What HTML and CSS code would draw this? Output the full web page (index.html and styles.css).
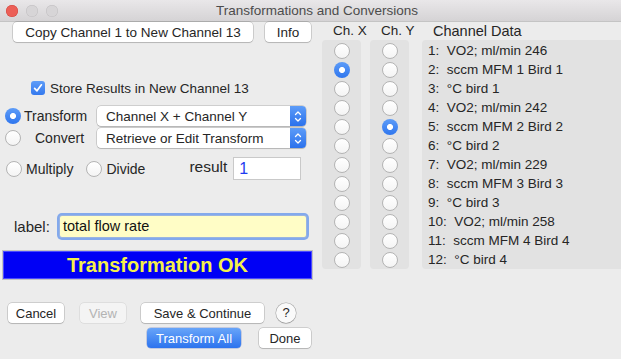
FILE: index.html
```html
<!DOCTYPE html>
<html lang="en">
<head>
    <meta charset="UTF-8">
    <title>Transformations and Conversions</title>
    <link rel="stylesheet" href="styles.css">
</head>
<body>
    <!-- Title bar -->
    <div class="titlebar">
        <div class="lights">
            <span class="light red"></span>
            <span class="light"></span>
            <span class="light"></span>
        </div>
        <div class="title">Transformations and Conversions</div>
    </div>

    <div class="window">
        <!-- Left side: controls -->
        <div class="left">
            <div class="top-buttons">
                <button class="btn copy-btn">Copy Channel 1 to New Channel 13</button>
                <button class="btn info-btn">Info</button>
            </div>

            <div class="store-row">
                <span class="checkbox">
                    <svg width="10" height="10" viewBox="0 0 10 10"><path d="M1.6 5.3 L4 7.8 L8.4 1.8" fill="none" stroke="#fff" stroke-width="1.7" stroke-linecap="round" stroke-linejoin="round"/></svg>
                </span>
                <span>Store Results in New Channel 13</span>
            </div>

            <div class="mode-row">
                <span class="radio on"></span>
                <span class="mode-label">Transform</span>
                <div class="select">
                    <span>Channel X + Channel Y</span>
                    <span class="stepper">
                        <svg width="8" height="13" viewBox="0 0 8 13"><path d="M1.5 4.5 L4 2 L6.5 4.5 M1.5 8.5 L4 11 L6.5 8.5" fill="none" stroke="#fff" stroke-width="1.3" stroke-linecap="round" stroke-linejoin="round"/></svg>
                    </span>
                </div>
            </div>

            <div class="mode-row second">
                <span class="radio"></span>
                <span class="mode-label convert">Convert</span>
                <div class="select">
                    <span>Retrieve or Edit Transform</span>
                    <span class="stepper">
                        <svg width="8" height="13" viewBox="0 0 8 13"><path d="M1.5 4.5 L4 2 L6.5 4.5 M1.5 8.5 L4 11 L6.5 8.5" fill="none" stroke="#fff" stroke-width="1.3" stroke-linecap="round" stroke-linejoin="round"/></svg>
                    </span>
                </div>
            </div>

            <div class="op-row">
                <span class="radio"></span>
                <span class="op-label">Multiply</span>
                <span class="radio divide"></span>
                <span class="op-label">Divide</span>
                <span class="result-label">result</span>
                <span class="result-box">1</span>
            </div>

            <div class="label-row">
                <span class="label-text">label:</span>
                <span class="label-input">total flow rate</span>
            </div>

            <div class="banner">Transformation OK</div>

            <div class="bottom-row">
                <button class="btn cancel-btn">Cancel</button>
                <button class="btn view-btn">View</button>
                <button class="btn save-btn">Save &amp; Continue</button>
                <span class="help">?</span>
            </div>
            <div class="bottom-row second">
                <button class="btn primary">Transform All</button>
                <button class="btn done-btn">Done</button>
            </div>
        </div>

        <!-- Right side: channel pickers -->
        <div class="channels">
            <div class="col-head">Ch. X</div>
            <div class="col-head">Ch. Y</div>
            <div class="col-head data-head">Channel Data</div>

            <div class="panel" id="chx"></div>
            <div class="panel" id="chy"></div>
            <div class="panel data" id="data"></div>
        </div>
    </div>

    <script>
        const CHANNELS = [
            '1:  VO2; ml/min 246',
            '2:  sccm MFM 1 Bird 1',
            '3:  \u00b0C bird 1',
            '4:  VO2; ml/min 242',
            '5:  sccm MFM 2 Bird 2',
            '6:  \u00b0C bird 2',
            '7:  VO2; ml/min 229',
            '8:  sccm MFM 3 Bird 3',
            '9:  \u00b0C bird 3',
            '10:  VO2; ml/min 258',
            '11:  sccm MFM 4 Bird 4',
            '12:  \u00b0C bird 4'
        ];
        const SELECTED_X = 1;
        const SELECTED_Y = 4;

        const chx = document.getElementById('chx');
        const chy = document.getElementById('chy');
        const data = document.getElementById('data');

        CHANNELS.forEach((name, i) => {
            const rx = document.createElement('div');
            rx.className = 'cell';
            rx.innerHTML = '<span class="radio' + (i === SELECTED_X ? ' on' : '') + '"></span>';
            chx.appendChild(rx);

            const ry = document.createElement('div');
            ry.className = 'cell';
            ry.innerHTML = '<span class="radio' + (i === SELECTED_Y ? ' on' : '') + '"></span>';
            chy.appendChild(ry);

            const d = document.createElement('div');
            d.className = 'data-row';
            d.textContent = name;
            data.appendChild(d);
        });
    </script>
</body>
</html>
```

FILE: styles.css
```css
/* Basic Styling */
body {
    margin: 0;
    width: 621px;
    height: 359px;
    overflow: hidden;
    background-color: #ececec;
    font-family: "Liberation Sans", Arial, sans-serif;
    font-size: 13px;
    color: #262626;
}

/* Title bar */
.titlebar {
    height: 21px;
    display: flex;
    align-items: center;
    background: linear-gradient(#e9e7e9, #d5d3d5);
    border-bottom: 1px solid #c4c4c4;
}

.lights {
    display: flex;
    gap: 8px;
    padding-left: 6px;
    width: 200px;
}

.light {
    width: 12px;
    height: 12px;
    border-radius: 50%;
    background-color: #d7d5d7;
    box-shadow: inset 0 0 0 0.5px #c0bec0;
}

.light.red {
    background-color: #ec5f57;
    box-shadow: inset 0 0 0 0.5px #d1453e;
}

.title {
    font-size: 13.5px;
    color: #4c4c4c;
    padding-left: 10px;
}

.window {
    display: flex;
}

/* Left column */
.left {
    width: 316px;
    flex-shrink: 0;
    display: flex;
    flex-direction: column;
}

.btn {
    font-family: inherit;
    font-size: 13px;
    color: #262626;
    height: 20px;
    padding: 0;
    background-color: #fff;
    border: none;
    border-radius: 4px;
    box-shadow: 0 0 0 0.5px rgba(0, 0, 0, 0.25), 0 1px 1px rgba(0, 0, 0, 0.12);
}

.top-buttons {
    display: flex;
    margin-top: 0;
}

.copy-btn { margin-left: 13px; width: 240px; font-size: 13.5px; }
.info-btn { margin-left: 12px; width: 46px; font-size: 13.5px; }

.store-row {
    margin-top: 38px;
    margin-left: 31px;
    display: flex;
    align-items: center;
    gap: 5px;
    height: 16px;
    font-size: 13.5px;
}

.checkbox {
    width: 14px;
    height: 14px;
    border-radius: 3px;
    background: linear-gradient(#5f9df8, #3479ee);
    display: flex;
    align-items: center;
    justify-content: center;
}

/* Radio buttons */
.radio {
    display: inline-block;
    width: 16px;
    height: 16px;
    box-sizing: border-box;
    border-radius: 50%;
    background: linear-gradient(#ffffff, #f4f4f4);
    border: 1px solid #b4b4b4;
    flex-shrink: 0;
}

.radio.on {
    border: none;
    background: radial-gradient(circle, #fff 0, #fff 2.7px, transparent 3.3px), linear-gradient(#5d9cf8, #2f76ee);
}

.mode-row {
    margin-top: 10px;
    display: flex;
    align-items: center;
    height: 20px;
    padding-left: 5px;
}

.mode-row.second {
    margin-top: 2px;
}

.mode-label {
    width: 73px;
    padding-left: 3px;
    font-size: 14px;
}

.mode-label.convert {
    padding-left: 14px;
    width: 62px;
}

.select {
    width: 209px;
    height: 20px;
    box-sizing: border-box;
    display: flex;
    align-items: center;
    justify-content: space-between;
    background-color: #fff;
    border-radius: 4px;
    box-shadow: 0 0 0 0.5px rgba(0, 0, 0, 0.25), 0 1px 1px rgba(0, 0, 0, 0.12);
    padding-left: 9px;
    font-size: 13.5px;
}

.stepper {
    width: 16px;
    height: 20px;
    border-radius: 0 4px 4px 0;
    background: linear-gradient(#5d9cf8, #2b71ec);
    display: flex;
    align-items: center;
    justify-content: center;
}

.op-row {
    margin-top: 9px;
    height: 23px;
    display: flex;
    align-items: center;
    padding-left: 6px;
}

.op-label {
    padding-left: 4px;
    font-size: 14px;
}

.radio.divide {
    margin-left: 13px;
}

.result-label {
    margin-left: 44px;
    font-size: 15.5px;
    padding-bottom: 3px;
}

.result-box {
    margin-left: 6px;
    width: 68px;
    height: 23px;
    box-sizing: border-box;
    background-color: #fff;
    border: 1px solid #c9c9c9;
    color: #1f3cf0;
    font-size: 16px;
    padding-left: 5px;
    line-height: 21px;
}

.label-row {
    margin-top: 33px;
    display: flex;
    align-items: center;
    height: 27px;
}

.label-text {
    margin-left: 14px;
    width: 43px;
    font-size: 15px;
}

.label-input {
    width: 243px;
    height: 21px;
    margin: 3px;
    background-color: #fffdc6;
    box-shadow: 0 0 0 1px #9ab4e0, 0 0 0 3px #83a9ec;
    border-radius: 2px;
    font-size: 14.5px;
    line-height: 21px;
    padding-left: 3px;
    color: #111;
}

.banner {
    margin-top: 10px;
    margin-left: 2px;
    width: 311px;
    height: 30px;
    box-sizing: border-box;
    background-color: #0000f5;
    border: 1px solid #c2c2c2;
    box-shadow: inset 0 0 0 1px #4a4aff;
    color: #f4f04a;
    font-weight: bold;
    font-size: 20px;
    text-align: center;
    line-height: 28px;
}

.bottom-row {
    margin-top: 23px;
    display: flex;
    align-items: center;
    height: 20px;
}

.bottom-row.second {
    margin-top: 5px;
}

.cancel-btn { margin-left: 8px; width: 56px; }
.view-btn {
    margin-left: 16px;
    width: 46px;
    color: #b3b3b3;
    background-color: #f4f4f4;
    box-shadow: 0 0 0 0.5px rgba(0, 0, 0, 0.12);
}
.save-btn { margin-left: 15px; width: 123px; }

.help {
    margin-left: 12px;
    width: 20px;
    height: 20px;
    border-radius: 50%;
    background-color: #fafafa;
    box-shadow: 0 0 0 0.5px rgba(0, 0, 0, 0.3), 0 1px 1px rgba(0, 0, 0, 0.12);
    text-align: center;
    line-height: 20px;
    font-size: 13px;
}

.btn.primary {
    margin-left: 147px;
    width: 94px;
    color: #fff;
    background: linear-gradient(#68a5f9, #2c73ee);
    box-shadow: 0 0 0 0.5px rgba(0, 40, 160, 0.35);
}

.done-btn { margin-left: 18px; width: 52px; }

/* Right side: channels */
.channels {
    flex: 1;
    margin-left: 6px;
    display: grid;
    grid-template-columns: 39px 39px 1fr;
    grid-template-rows: 18px 229px;
    column-gap: 9px;
}

.channels .data {
    margin-left: 4px;
    border-radius: 4px 0 0 4px;
}

.col-head {
    font-size: 13.5px;
    line-height: 18px;
    padding-left: 11px;
    white-space: nowrap;
}

.data-head {
    padding-left: 15px;
    font-size: 14.5px;
}

.panel {
    background-color: #e2e2e2;
    border-radius: 4px;
    padding-top: 1px;
}

.cell {
    height: 19px;
    display: flex;
    align-items: center;
    justify-content: center;
}

.data-row {
    height: 19px;
    line-height: 19px;
    padding-left: 6px;
    font-size: 13.5px;
    white-space: pre;
}
```
